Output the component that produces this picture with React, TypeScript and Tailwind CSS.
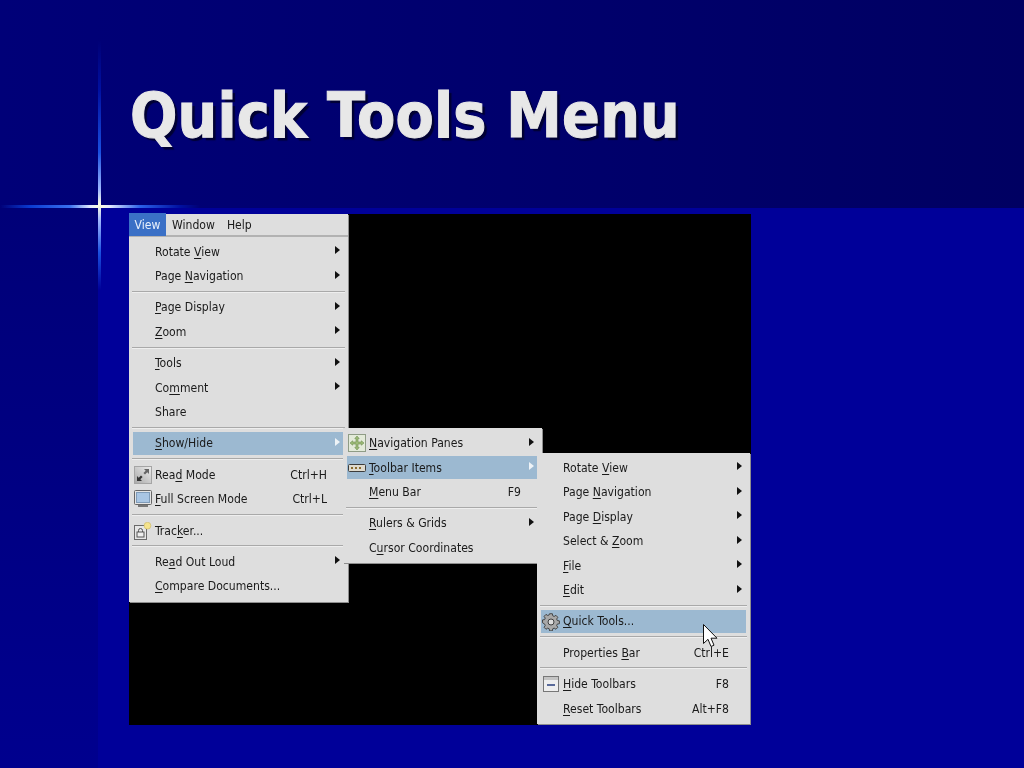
import React from 'react';

type Row = { label?: string; shortcut?: string; arrow?: boolean; active?: boolean; icon?: React.ReactNode; sep?: boolean };

const ReadModeIcon = () => (
  <svg width="18" height="18" viewBox="0 0 18 18">
    <defs>
      <linearGradient id="readBg" x1="0" y1="1" x2="1" y2="0">
        <stop offset="0" stopColor="#a8a8a8" />
        <stop offset="1" stopColor="#eeeeee" />
      </linearGradient>
    </defs>
    <rect x="0.5" y="0.5" width="17" height="17" fill="url(#readBg)" stroke="#a5a5a5" />
    <path d="M10 3h5v5l-1.7-1.7-2.3 2.3-1.6-1.6 2.3-2.3z" fill="#666" />
    <path d="M8 15H3v-5l1.7 1.7 2.3-2.3 1.6 1.6-2.3 2.3z" fill="#333" />
  </svg>
);

const FullScreenIcon = () => (
  <svg width="18" height="18" viewBox="0 0 18 18">
    <rect x="0.5" y="0.5" width="17" height="14" rx="1" fill="#e4e4e4" stroke="#666" />
    <rect x="2.5" y="2.5" width="13" height="10" fill="#a9c6e4" stroke="#7f9bb8" />
    <rect x="4" y="15" width="10" height="2" fill="#777" />
  </svg>
);

const TrackerIcon = () => (
  <svg width="18" height="18" viewBox="0 0 18 18">
    <rect x="0.5" y="3.5" width="12" height="14" fill="#e6e6e6" stroke="#6a6a6a" />
    <path d="M4.5 10V8.5a2 2 0 0 1 4 0V10" fill="none" stroke="#555" />
    <rect x="3" y="10" width="7" height="5" fill="#eeeeee" stroke="#555" />
    <circle cx="13.5" cy="3.7" r="3.4" fill="#f5e38c" stroke="#c9b765" strokeWidth="0.6" />
  </svg>
);

const NavPanesIcon = () => (
  <svg width="18" height="18" viewBox="0 0 18 18">
    <rect x="0.5" y="0.5" width="17" height="17" fill="#e3ead9" stroke="#8f9c86" />
    <path d="M9 2l2.2 2.6H10V8h3.4V6.8L16 9l-2.6 2.2V10H10v3.4h1.2L9 16l-2.2-2.6H8V10H4.6v1.2L2 9l2.6-2.2V8H8V4.6H6.8z" fill="#9dbb78" stroke="#6f8f52" strokeWidth="0.6" />
  </svg>
);

const ToolbarItemsIcon = () => (
  <svg width="18" height="8" viewBox="0 0 18 8">
    <rect x="0.5" y="0.5" width="17" height="7" rx="1" fill="#dedace" stroke="#3c3c3c" />
    <path d="M3 4h2M7 4h2M11 4h2" stroke="#8a6b2e" strokeWidth="2" />
  </svg>
);

const GearIcon = () => (
  <svg width="18" height="18" viewBox="0 0 18 18">
    <path
      d="M7.5 1h3l.4 2.2 1.5.7 1.9-1.2 2 2.1-1.2 1.8.6 1.6 2.3.4v3l-2.3.4-.6 1.6 1.2 1.8-2 2.1-1.9-1.2-1.5.7-.4 2.2h-3l-.4-2.2-1.5-.7-1.9 1.2-2-2.1 1.2-1.8-.6-1.6L0 10.6v-3l2.3-.4.6-1.6L1.7 3.8l2-2.1 1.9 1.2 1.5-.7z"
      fill="#a8a8a8"
      stroke="#3f3f3f"
      transform="translate(0.5 -0.2) scale(0.94)"
    />
    <circle cx="9" cy="9" r="3" fill="#dcdcdc" stroke="#3f3f3f" />
  </svg>
);

const HideToolbarsIcon = () => (
  <svg width="16" height="16" viewBox="0 0 16 16">
    <rect x="0.5" y="0.5" width="15" height="15" fill="#eeeeee" stroke="#777" />
    <rect x="1" y="1" width="14" height="3" fill="#c4c4c4" />
    <rect x="4" y="8" width="8" height="2" fill="#5a6a9a" />
  </svg>
);

const viewMenu: Row[] = [
  { label: 'Rotate _View', arrow: true },
  { label: 'Page _Navigation', arrow: true },
  { sep: true },
  { label: '_Page Display', arrow: true },
  { label: '_Zoom', arrow: true },
  { sep: true },
  { label: '_Tools', arrow: true },
  { label: 'Co_mment', arrow: true },
  { label: 'Share' },
  { sep: true },
  { label: '_Show/Hide', arrow: true, active: true },
  { sep: true },
  { label: 'Rea_d Mode', shortcut: 'Ctrl+H', icon: <ReadModeIcon /> },
  { label: '_Full Screen Mode', shortcut: 'Ctrl+L', icon: <FullScreenIcon /> },
  { sep: true },
  { label: 'Trac_ker...', icon: <TrackerIcon /> },
  { sep: true },
  { label: 'Re_ad Out Loud', arrow: true },
  { label: '_Compare Documents...' },
];

const showHideMenu: Row[] = [
  { label: '_Navigation Panes', arrow: true, icon: <NavPanesIcon /> },
  { label: '_Toolbar Items', arrow: true, active: true, icon: <ToolbarItemsIcon /> },
  { label: '_Menu Bar', shortcut: 'F9' },
  { sep: true },
  { label: '_Rulers & Grids', arrow: true },
  { label: 'C_ursor Coordinates' },
];

const toolbarMenu: Row[] = [
  { label: 'Rotate _View', arrow: true },
  { label: 'Page _Navigation', arrow: true },
  { label: 'Page _Display', arrow: true },
  { label: 'Select & _Zoom', arrow: true },
  { label: '_File', arrow: true },
  { label: '_Edit', arrow: true },
  { sep: true },
  { label: '_Quick Tools...', active: true, icon: <GearIcon /> },
  { sep: true },
  { label: 'Properties _Bar', shortcut: 'Ctrl+E' },
  { sep: true },
  { label: '_Hide Toolbars', shortcut: 'F8', icon: <HideToolbarsIcon /> },
  { label: '_Reset Toolbars', shortcut: 'Alt+F8' },
];

function Label({ text }: { text: string }) {
  const [before, rest] = text.split('_');
  if (rest === undefined) return <span>{before}</span>;
  return (
    <span>
      {before}
      <span className="underline underline-offset-2">{rest[0]}</span>
      {rest.slice(1)}
    </span>
  );
}

function MenuRows({ rows }: { rows: Row[] }) {
  return (
    <>
      {rows.map((row, i) =>
        row.sep ? (
          <div key={i} className="h-[6.8px] flex items-center px-[3px]">
            <div className="h-[2px] w-full bg-[#a9a9a9] border-b border-[#eeeeee]" />
          </div>
        ) : (
          <div key={i} className="h-[24.5px] flex items-center px-[4px]">
            <div
              className={`relative flex h-[23px] w-full items-center pl-[22px] pr-[17px] ${
                row.active ? 'bg-[#9cb9d1]' : ''
              }`}
            >
              {row.icon && (
                <span className="absolute left-[1px] top-0 flex h-full w-[18px] items-center justify-center">
                  {row.icon}
                </span>
              )}
              <Label text={row.label ?? ''} />
              {row.shortcut && <span className="ml-auto">{row.shortcut}</span>}
              {row.arrow && (
                <span
                  className={`absolute right-[4px] top-[6px] h-0 w-0 border-y-[4px] border-l-[5px] border-y-transparent ${
                    row.active ? 'border-l-[#eef3f7]' : 'border-l-[#111111]'
                  }`}
                />
              )}
            </div>
          </div>
        ),
      )}
    </>
  );
}

const App: React.FC = () => {
  return (
    <div className="relative h-[768px] w-[1024px] overflow-hidden bg-[#000099] font-['Liberation_Sans',sans-serif]">
      {/* title band */}
      <header className="h-[208px] bg-gradient-to-r from-[#000078] to-[#000062] pl-[130px] pt-[79px]">
        <h1 className="text-[62px] font-bold leading-[74px] tracking-[0.2px] text-[#e8e8e8] font-['DejaVu_Sans',sans-serif] [font-stretch:condensed] [-webkit-text-stroke:1px_#e8e8e8] [text-shadow:3px_3px_1px_#000033]">
          Quick Tools Menu
        </h1>
      </header>

      <div className="flex h-[560px]">
        <div className="h-full w-[98px] bg-gradient-to-b from-[#000078] to-[#00008e]" />
        <div className="pl-[31px] pt-[6px]">
          {/* screenshot */}
          <div className="relative h-[511px] w-[622px] bg-black text-[12.1px] text-[#1a1a1a] font-['DejaVu_Sans',sans-serif] [font-stretch:condensed] blur-[0.3px]">
            <div className="w-[219px] bg-[#dedede] pb-[3px] shadow-[1px_1px_0_#8e8e8e]">
              <div className="flex h-[23px] items-center border-b-2 border-[#b2b2b2] pt-[1px]">
                <span className="-mt-[1px] flex h-[23px] w-[37px] items-center justify-center bg-[#3a70c6] pt-[1px] text-[#e8f0fb]">View</span>
                <span className="ml-[6px]">Window</span>
                <span className="ml-[12px]">Help</span>
              </div>
              <div className="pt-[2.4px]">
                <MenuRows rows={viewMenu} />
              </div>
            </div>

            <div className="absolute left-[214px] top-[214px] w-[199px] bg-[#dedede] pb-[3px] pt-[3px] shadow-[1px_1px_0_#8e8e8e]">
              <MenuRows rows={showHideMenu} />
            </div>

            <div className="absolute left-[408px] top-[239px] w-[213px] bg-[#dedede] pb-[3px] pt-[2.5px] shadow-[1px_1px_0_#8e8e8e]">
              <MenuRows rows={toolbarMenu} />
            </div>

            {/* cursor */}
            <svg className="absolute left-[574px] top-[410px]" width="16" height="26" viewBox="0 0 16 26">
              <path d="M0.5 0.5v19l4.5-4.2 3 7.2 3-1.3-3-7h6z" fill="#ffffff" stroke="#111111" />
            </svg>
          </div>
        </div>
      </div>

      {/* star flare */}
      <div className="absolute left-0 top-[205px] h-[3px] w-[200px] bg-[linear-gradient(to_right,#00008000,#0a3ad0_15%,#3a70f0_35%,#e0e8ff_45%,#ffffe0_50%,#e0e8ff_55%,#2a60e8_70%,#0010a0_90%,#00008000)] blur-[0.5px]" />
      <div className="absolute left-[98px] top-[40px] h-[250px] w-[3px] bg-[linear-gradient(to_bottom,#00008000,#0010a0_20%,#1a50e0_45%,#a0b8ff_60%,#ffffe0_66%,#a0b8ff_72%,#1a50e0_85%,#00008000)] blur-[0.5px]" />
    </div>
  );
};

export default App;
